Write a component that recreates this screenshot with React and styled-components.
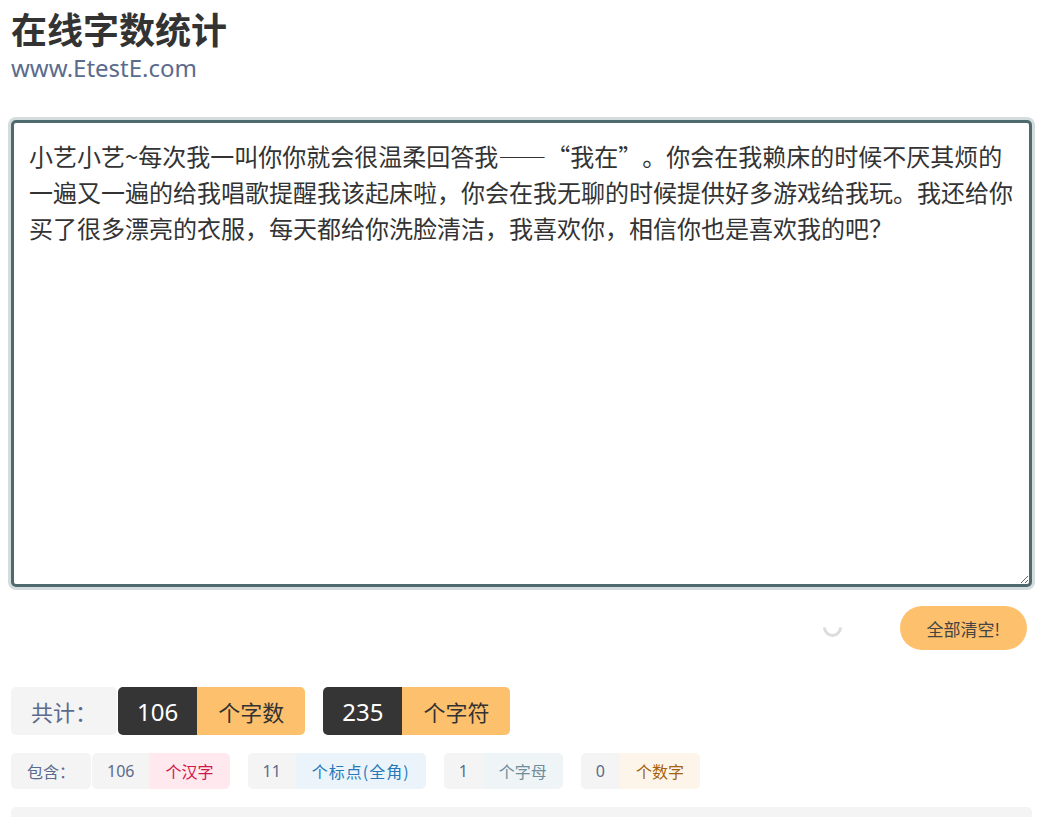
import React, { useEffect, useRef } from "react";
import styled, { createGlobalStyle } from "styled-components";

const GlobalStyle = createGlobalStyle`
	body {
		margin: 0;
		background: #fff;
		font-family: "Noto Sans", "Noto Sans CJK SC", sans-serif;
		color: #333;
	}
`;

const Page = styled.div`
	padding: 0 7px 0 11px;
`;

const Title = styled.h1`
	margin: 7px 0 0;
	font-family: "Noto Sans CJK SC", sans-serif;
	font-size: 36px;
	font-weight: 700;
	line-height: 43px;
	color: #333;
`;

const Site = styled.div`
	margin-top: 2px;
	font-size: 24px;
	line-height: 32px;
	color: #5b6b8d;
`;

const Editor = styled.textarea`
	display: block;
	box-sizing: border-box;
	width: 100%;
	height: 467px;
	margin-top: 36px;
	padding: 15px;
	border: 3px solid #4f6a6e;
	border-radius: 5px;
	box-shadow: 0 0 0 3px #d5dcdd;
	outline: none;
	resize: vertical;
	font-family: "Noto Sans CJK SC", sans-serif;
	font-size: 24px;
	line-height: 36px;
	color: #333;
	text-spacing-trim: space-all;
`;

const Actions = styled.div`
	display: flex;
	align-items: center;
	justify-content: flex-end;
	gap: 58px;
	margin-top: 19px;
	padding-right: 5px;
`;

const Spinner = styled.span`
	display: block;
	width: 19px;
	height: 19px;
	box-sizing: border-box;
	border-radius: 50%;
	border: 3px solid transparent;
	border-bottom-color: #dcdcdc;
	border-left-color: #dcdcdc;
	transform: rotate(-45deg);
	margin-top: -2px;
`;

const ClearButton = styled.button`
	height: 44px;
	padding: 0 27px;
	border: none;
	border-radius: 22px;
	background: #fdc06c;
	color: #444;
	font-family: "Noto Sans CJK SC", sans-serif;
	font-size: 17px;
	cursor: pointer;
`;

const Row = styled.div`
	display: flex;
	align-items: stretch;
	gap: 18px;
	margin-top: ${(p) => p.$top}px;
	height: ${(p) => p.$h}px;
`;

const Chip = styled.div`
	display: flex;
	align-items: center;
	border-radius: 5px;
	overflow: hidden;
	font-family: "Noto Sans CJK SC", sans-serif;
`;

const Label = styled(Chip)`
	background: #f4f4f4;
	color: #5b6b8d;
	font-size: ${(p) => (p.$big ? 22 : 16)}px;
	padding: 0 ${(p) => (p.$big ? 20 : 16)}px;
	margin-right: -17px;
`;

const Pair = styled(Chip)``;

const Num = styled.span`
	display: flex;
	align-items: center;
	height: 100%;
	padding: 0 ${(p) => (p.$big ? 19 : 15)}px;
	background: ${(p) => (p.$big ? "#353535" : "#f4f4f4")};
	color: ${(p) => (p.$big ? "#fff" : "#5b6b8d")};
	font-family: "Noto Sans", sans-serif;
	font-size: ${(p) => (p.$big ? 24 : 16)}px;
`;

const Unit = styled.span`
	display: flex;
	align-items: center;
	height: 100%;
	padding: 0 ${(p) => (p.$big ? 21 : 16)}px;
	background: ${(p) => p.$bg};
	color: ${(p) => p.$fg};
	font-size: ${(p) => (p.$big ? 22 : 16)}px;
	letter-spacing: ${(p) => (p.$loose ? "1px" : "0")};
`;

const Bottom = styled.div`
	margin-top: 18px;
	height: 60px;
	background: #f4f4f4;
	border-radius: 5px;
`;

const text =
	"小艺小艺~每次我一叫你你就会很温柔回答我——“我在”。你会在我赖床的时候不厌其烦的一遍又一遍的给我唱歌提醒我该起床啦，你会在我无聊的时候提供好多游戏给我玩。我还给你买了很多漂亮的衣服，每天都给你洗脸清洁，我喜欢你，相信你也是喜欢我的吧？";

const details = [
	{ n: 106, unit: "个汉字", bg: "#ffe9ef", fg: "#d0164a" },
	{ n: 11, unit: "个标点(全角)", bg: "#ebf4fb", fg: "#2779b8", loose: true },
	{ n: 1, unit: "个字母", bg: "#eff4f6", fg: "#6f8d9b" },
	{ n: 0, unit: "个数字", bg: "#fef5ea", fg: "#a3620b" }
];

export default function App() {
	const ref = useRef(null);

	useEffect(() => {
		const el = ref.current;
		if (el) {
			el.focus();
			el.setSelectionRange(el.value.length, el.value.length);
		}
	}, []);

	return (
		<Page>
			<GlobalStyle />
			<Title>在线字数统计</Title>
			<Site>www.EtestE.com</Site>
			<Editor ref={ref} lang="zh-CN" defaultValue={text} spellCheck={false} />
			<Actions>
				<Spinner />
				<ClearButton>全部清空!</ClearButton>
			</Actions>
			<Row $top={37} $h={48}>
				<Label $big>共计：</Label>
				<Pair>
					<Num $big>106</Num>
					<Unit $big $bg="#fdc06c" $fg="#333">个字数</Unit>
				</Pair>
				<Pair>
					<Num $big>235</Num>
					<Unit $big $bg="#fdc06c" $fg="#333">个字符</Unit>
				</Pair>
			</Row>
			<Row $top={18} $h={36}>
				<Label>包含：</Label>
				{details.map((d) => (
					<Pair key={d.unit}>
						<Num>{d.n}</Num>
						<Unit $bg={d.bg} $fg={d.fg} $loose={d.loose}>{d.unit}</Unit>
					</Pair>
				))}
			</Row>
			<Bottom />
		</Page>
	);
}
